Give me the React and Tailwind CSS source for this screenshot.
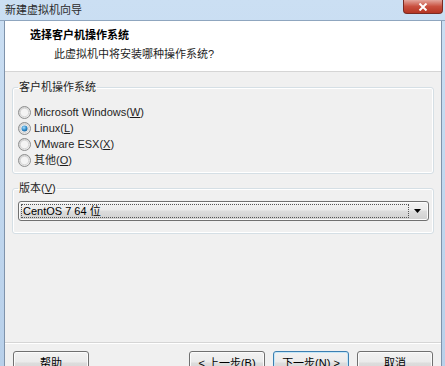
import React from 'react';

const font = { fontFamily: '"Liberation Sans", "Noto Sans CJK SC", sans-serif' };

const Radio = ({ checked }) => (
    <svg width="13" height="13" viewBox="0 0 13 13" className="shrink-0">
        <defs>
            <linearGradient id="rfill" x1="0" y1="0" x2="1" y2="1">
                <stop offset="0" stopColor="#cbcbcb" />
                <stop offset="1" stopColor="#f6f6f6" />
            </linearGradient>
            <radialGradient id="rdot" cx="0.4" cy="0.35" r="0.7">
                <stop offset="0" stopColor="#a9dcfb" />
                <stop offset="0.6" stopColor="#2f8ccb" />
                <stop offset="1" stopColor="#1b5f93" />
            </radialGradient>
        </defs>
        <circle cx="6.5" cy="6.5" r="6" fill="url(#rfill)" stroke="#8e8f8f" strokeWidth="1" />
        <circle cx="6.5" cy="6.5" r="4.2" fill="#f4f4f4" stroke="#d0d0d0" strokeWidth="0.8" />
        {checked && <circle cx="6.5" cy="6.5" r="3" fill="url(#rdot)" />}
    </svg>
);

const Button = ({ children, primary }) => (
    <div
        className={`h-[24px] w-[76px] shrink-0 rounded-[3px] border flex items-center justify-center text-[11px] text-black bg-[linear-gradient(#f2f2f2_0%,#ebebeb_45%,#dddddd_50%,#cfcfcf_100%)] ${
            primary ? 'border-[#3c7fb1] shadow-[inset_0_0_0_1px_#c5e7f8]' : 'border-[#707070] shadow-[inset_0_0_0_1px_#fbfbfb]'
        }`}
    >
        {children}
    </div>
);

const GroupBox = ({ label, children, className }) => (
    <fieldset className={`border border-[#d5dfe5] rounded-[3px] shadow-[inset_0_0_0_1px_#ffffff] px-[5px] ${className}`}>
        <legend className="px-[1px] text-[11px] leading-[16px] text-[#1e1e1e]">{label}</legend>
        {children}
    </fieldset>
);

const options = [
    { text: 'Microsoft Windows', key: 'W' },
    { text: 'Linux', key: 'L', checked: true },
    { text: 'VMware ESX', key: 'X' },
    { text: '其他', key: 'O' },
];

export default function App() {
    return (
        <div className="w-[445px] h-[366px] overflow-hidden relative flex flex-col bg-[linear-gradient(#cbdff3,#b8d0ea)]" style={font}>
            {/* Title bar */}
            <div className="h-[21px] shrink-0 flex items-center pl-[5px] text-[11px] text-[#2a2a2a] border-b border-[#8fa6bf]">
                新建虚拟机向导
            </div>
            <div className="absolute top-0 right-[2px] w-[40px] h-[14px] rounded-b-[4px] border border-t-0 border-[#7a2a22] bg-[linear-gradient(#e4a69d,#c9503f_50%,#b53523)] flex items-center justify-center">
                <svg width="10" height="8" viewBox="0 0 10 8">
                    <path d="M1.5 0.5 L8.5 7.5 M8.5 0.5 L1.5 7.5" stroke="#ffffff" strokeWidth="2" />
                </svg>
            </div>

            {/* Window frame */}
            <div className="flex-1 flex ml-[4px] mr-[3px] border-l border-r border-[#7f93ab] min-h-0">
                <div className="flex-1 flex flex-col bg-[#f0f0f0]">
                    {/* Header */}
                    <div className="h-[51px] shrink-0 bg-white border-b border-[#d5d5d5] flex flex-col pl-[25px] pt-[6px]">
                        <div className="text-[11px] leading-[16px] font-bold text-black">选择客户机操作系统</div>
                        <div className="text-[11px] leading-[16px] text-[#1e1e1e] pl-[24px] pt-[3px]">此虚拟机中将安装哪种操作系统?</div>
                    </div>

                    {/* Body */}
                    <div className="flex-1 flex flex-col px-[7px] pt-[7px]">
                        <GroupBox label="客户机操作系统" className="pb-[5px] pt-[9px]">
                            <div className="flex flex-col">
                                {options.map((o) => (
                                    <div key={o.key} className="h-[16px] flex items-center gap-[3px] text-[11px] text-[#1e1e1e]">
                                        <Radio checked={o.checked} />
                                        <span>
                                            {o.text}(<u>{o.key}</u>)
                                        </span>
                                    </div>
                                ))}
                            </div>
                        </GroupBox>

                        <GroupBox label={<>版本(<u>V</u>)</>} className="mt-[6px] pt-[5px] pb-[12px] pr-[4px]">
                            <div className="h-[20px] rounded-[3px] border border-[#707070] shadow-[inset_0_0_0_1px_#fbfbfb] bg-[linear-gradient(#f2f2f2_0%,#ebebeb_45%,#dddddd_50%,#cfcfcf_100%)] flex items-center p-[2px]">
                                <div className="flex-1 h-full border border-dotted border-[#555] flex items-center pl-[1px] text-[11px] text-black">
                                    CentOS 7 64 位
                                </div>
                                <div className="w-[17px] flex items-center justify-center">
                                    <svg width="7" height="4" viewBox="0 0 7 4">
                                        <path d="M0 0 H7 L3.5 4 Z" fill="#000" />
                                    </svg>
                                </div>
                            </div>
                        </GroupBox>
                    </div>

                    {/* Footer */}
                    <div className="shrink-0 border-t border-[#d5d5d5] shadow-[inset_0_1px_0_#ffffff] h-[24px] flex items-start pt-[8px] px-[8px]">
                        <Button>帮助</Button>
                        <div className="flex-1" />
                        <div className="flex gap-[8px]">
                            <Button>&lt; 上一步(B)</Button>
                            <Button primary>下一步(N) &gt;</Button>
                            <Button>取消</Button>
                        </div>
                    </div>
                </div>
            </div>
        </div>
    );
}
